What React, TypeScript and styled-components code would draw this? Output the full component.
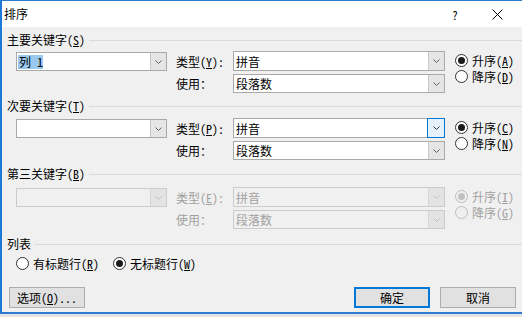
import React from "react";
import styled, { createGlobalStyle, css } from "styled-components";

const Global = createGlobalStyle`
  html, body { margin: 0; padding: 0; }
  body {
    width: 522px; height: 317px; overflow: hidden;
    background: #e4e4e4;
    font-family: "Noto Sans Mono CJK SC", "Noto Sans CJK SC", "Noto Sans", sans-serif;
    font-size: 12px; color: #000;
  }
`;

const Window = styled.div`
  width: 522px;
  height: 314px;
  box-sizing: border-box;
  border-top: 1px solid #2b7bd1;
  border-left: 2px solid #1c7ad6;
  border-bottom: 2px solid #2b7bd1;
  background: #f0f0f0;
  display: flex;
  flex-direction: column;
`;

const TitleBar = styled.div`
  height: 26px;
  flex: none;
  background: #fff;
  display: flex;
  align-items: center;
  padding-left: 2px;
  padding-right: 2px;
`;

const TitleText = styled.div`
  flex: 1;
  font-family: "Noto Sans CJK SC", sans-serif;
  font-size: 12px;
  line-height: 26px;
`;

const TitleButton = styled.div<{ $w: number }>`
  width: ${(p) => p.$w}px;
  height: 26px;
  display: flex;
  align-items: center;
  justify-content: center;
  font-size: 12px;
  color: #000;
`;

const Body = styled.div`
  flex: 1;
  display: flex;
  flex-direction: column;
  padding: 6px 6px 0 5px;
`;

const GroupHeader = styled.div<{ $mt: number }>`
  display: flex;
  align-items: center;
  gap: 4px;
  height: 14px;
  margin-top: ${(p) => p.$mt}px;
  margin-right: -6px;
  line-height: 14px;
  white-space: nowrap;
`;

const Rule = styled.div`
  flex: 1;
  height: 1px;
  background: #dadada;
`;

const GroupContent = styled.div<{ $mt: number }>`
  display: flex;
  margin-top: ${(p) => p.$mt}px;
  padding-left: 9px;
`;

const KeyCol = styled.div`
  width: 151px;
  margin-right: 9px;
  padding-top: 1px;
`;

const FieldCol = styled.div`
  display: flex;
  flex-direction: column;
  gap: 3px;
`;

const FieldRow = styled.div`
  display: flex;
  align-items: center;
`;

const FieldLabel = styled.div<{ $disabled?: boolean }>`
  width: 57px;
  white-space: nowrap;
  color: ${(p) => (p.$disabled ? "#a0a0a0" : "#000")};
`;

const OrderCol = styled.div`
  margin-left: 10px;
  padding-top: 1px;
  display: flex;
  flex-direction: column;
`;

const ComboBox = styled.div<{ $w: number; $h: number; $disabled?: boolean }>`
  width: ${(p) => p.$w}px;
  height: ${(p) => p.$h}px;
  box-sizing: border-box;
  display: flex;
  border: 1px solid ${(p) => (p.$disabled ? "#cccccc" : "#a9a9a9")};
  background: ${(p) => (p.$disabled ? "#f0f0f0" : "#fff")};
  color: ${(p) => (p.$disabled ? "#a0a0a0" : "#000")};
`;

const ComboValue = styled.div`
  flex: 1;
  display: flex;
  align-items: center;
  padding-left: 2px;
  overflow: hidden;
  white-space: nowrap;
`;

const Highlight = styled.span`
  display: inline-flex;
  align-items: center;
  width: 25px;
  height: 14px;
  margin-left: -1px;
  padding-left: 1px;
  box-sizing: border-box;
  background: #99c9ef;
  white-space: pre;
`;

const DropButton = styled.div<{ $disabled?: boolean; $focus?: boolean }>`
  width: 16px;
  flex: none;
  display: flex;
  align-items: center;
  justify-content: center;
  box-sizing: border-box;
  background: ${(p) => (p.$disabled ? "#e3e3e3" : "#e5e5e5")};
  border-left: 1px solid ${(p) => (p.$disabled ? "#d6d6d6" : "#c8c8c8")};
  ${(p) =>
    p.$focus &&
    css`
      margin: -1px -1px -1px 0;
      width: 18px;
      border: 1px solid #0078d7;
      background: #e5f1fb;
    `}
`;

const RadioItem = styled.div<{ $disabled?: boolean }>`
  display: flex;
  align-items: center;
  gap: 4px;
  height: 16px;
  white-space: nowrap;
  color: ${(p) => (p.$disabled ? "#a0a0a0" : "#000")};
`;

const RadioCircle = styled.span<{ $checked?: boolean; $disabled?: boolean }>`
  width: 13px;
  height: 13px;
  box-sizing: border-box;
  border-radius: 50%;
  border: 1px solid ${(p) => (p.$disabled ? "#bcbcbc" : "#333")};
  background: ${(p) => (p.$disabled ? "#f0f0f0" : "#fff")};
  display: flex;
  align-items: center;
  justify-content: center;
  flex: none;
  &::after {
    content: "";
    display: ${(p) => (p.$checked ? "block" : "none")};
    width: 7px;
    height: 7px;
    border-radius: 50%;
    background: ${(p) => (p.$disabled ? "#c0c0c0" : "#1a1a1a")};
  }
`;

const ListRow = styled.div`
  display: flex;
  align-items: center;
  gap: 14px;
  margin-top: 4px;
  padding-left: 9px;
  height: 16px;
`;

const ButtonRow = styled.div`
  display: flex;
  justify-content: space-between;
  margin-top: 16px;
  padding-left: 2px;
`;

const ButtonGroup = styled.div`
  display: flex;
  gap: 10px;
`;

const Button = styled.div<{ $default?: boolean }>`
  width: 76px;
  height: 21px;
  box-sizing: border-box;
  display: flex;
  align-items: center;
  justify-content: center;
  background: #e1e1e1;
  border: ${(p) => (p.$default ? "2px solid #0078d7" : "1px solid #adadad")};
  white-space: nowrap;
`;

const Chevron = ({ color }: { color: string }) => (
  <svg width="7" height="4" viewBox="0 0 7 4">
    <polyline points="0.5,0.5 3.5,3.5 6.5,0.5" fill="none" stroke={color} strokeWidth="1" />
  </svg>
);

const Combo = ({
  w,
  h,
  disabled,
  focus,
  children,
}: {
  w: number;
  h: number;
  disabled?: boolean;
  focus?: boolean;
  children?: React.ReactNode;
}) => (
  <ComboBox $w={w} $h={h} $disabled={disabled}>
    <ComboValue>{children}</ComboValue>
    <DropButton $disabled={disabled} $focus={focus}>
      <Chevron color={disabled ? "#bdbdbd" : focus ? "#333" : "#606060"} />
    </DropButton>
  </ComboBox>
);

const Radio = ({
  checked,
  disabled,
  text,
  k,
}: {
  checked?: boolean;
  disabled?: boolean;
  text: string;
  k: string;
}) => (
  <RadioItem $disabled={disabled}>
    <RadioCircle $checked={checked} $disabled={disabled} />
    <span>
      {text}(<u>{k}</u>)
    </span>
  </RadioItem>
);

type GroupProps = {
  title: string;
  titleKey: string;
  typeKey: string;
  ascKey: string;
  descKey: string;
  headerMt: number;
  contentMt: number;
  keyValue?: React.ReactNode;
  disabled?: boolean;
  focus?: boolean;
};

const Group = ({
  title,
  titleKey,
  typeKey,
  ascKey,
  descKey,
  headerMt,
  contentMt,
  keyValue,
  disabled,
  focus,
}: GroupProps) => (
  <>
    <GroupHeader $mt={headerMt}>
      <span>
        {title}(<u>{titleKey}</u>)
      </span>
      <Rule />
    </GroupHeader>
    <GroupContent $mt={contentMt}>
      <KeyCol>
        <Combo w={151} h={19} disabled={disabled}>
          {keyValue}
        </Combo>
      </KeyCol>
      <FieldCol>
        <FieldRow>
          <FieldLabel $disabled={disabled}>
            类型(<u>{typeKey}</u>):
          </FieldLabel>
          <Combo w={212} h={20} disabled={disabled} focus={focus}>
            拼音
          </Combo>
        </FieldRow>
        <FieldRow>
          <FieldLabel $disabled={disabled}>使用：</FieldLabel>
          <Combo w={212} h={19} disabled={disabled}>
            段落数
          </Combo>
        </FieldRow>
      </FieldCol>
      <OrderCol>
        <Radio checked text="升序" k={ascKey} disabled={disabled} />
        <Radio text="降序" k={descKey} disabled={disabled} />
      </OrderCol>
    </GroupContent>
  </>
);

export default function App() {
  return (
    <>
      <Global />
      <Window>
        <TitleBar>
          <TitleText>排序</TitleText>
          <TitleButton $w={38}>?</TitleButton>
          <TitleButton $w={46}>
            <svg width="11" height="11" viewBox="0 0 11 11">
              <path d="M0.5 0.5 L10.5 10.5 M10.5 0.5 L0.5 10.5" stroke="#000" strokeWidth="1" />
            </svg>
          </TitleButton>
        </TitleBar>
        <Body>
          <Group
            title="主要关键字"
            titleKey="S"
            typeKey="Y"
            ascKey="A"
            descKey="D"
            headerMt={0}
            contentMt={4}
            keyValue={<Highlight>列 1</Highlight>}
          />
          <Group
            title="次要关键字"
            titleKey="T"
            typeKey="P"
            ascKey="C"
            descKey="N"
            headerMt={6}
            contentMt={5}
            focus
          />
          <Group
            title="第三关键字"
            titleKey="B"
            typeKey="E"
            ascKey="I"
            descKey="G"
            headerMt={7}
            contentMt={6}
            disabled
          />
          <GroupHeader $mt={8}>
            <span>列表</span>
            <Rule />
          </GroupHeader>
          <ListRow>
            <Radio text="有标题行" k="R" />
            <Radio checked text="无标题行" k="W" />
          </ListRow>
          <ButtonRow>
            <Button>
              选项(<u>O</u>)...
            </Button>
            <ButtonGroup>
              <Button $default>确定</Button>
              <Button>取消</Button>
            </ButtonGroup>
          </ButtonRow>
        </Body>
      </Window>
    </>
  );
}
